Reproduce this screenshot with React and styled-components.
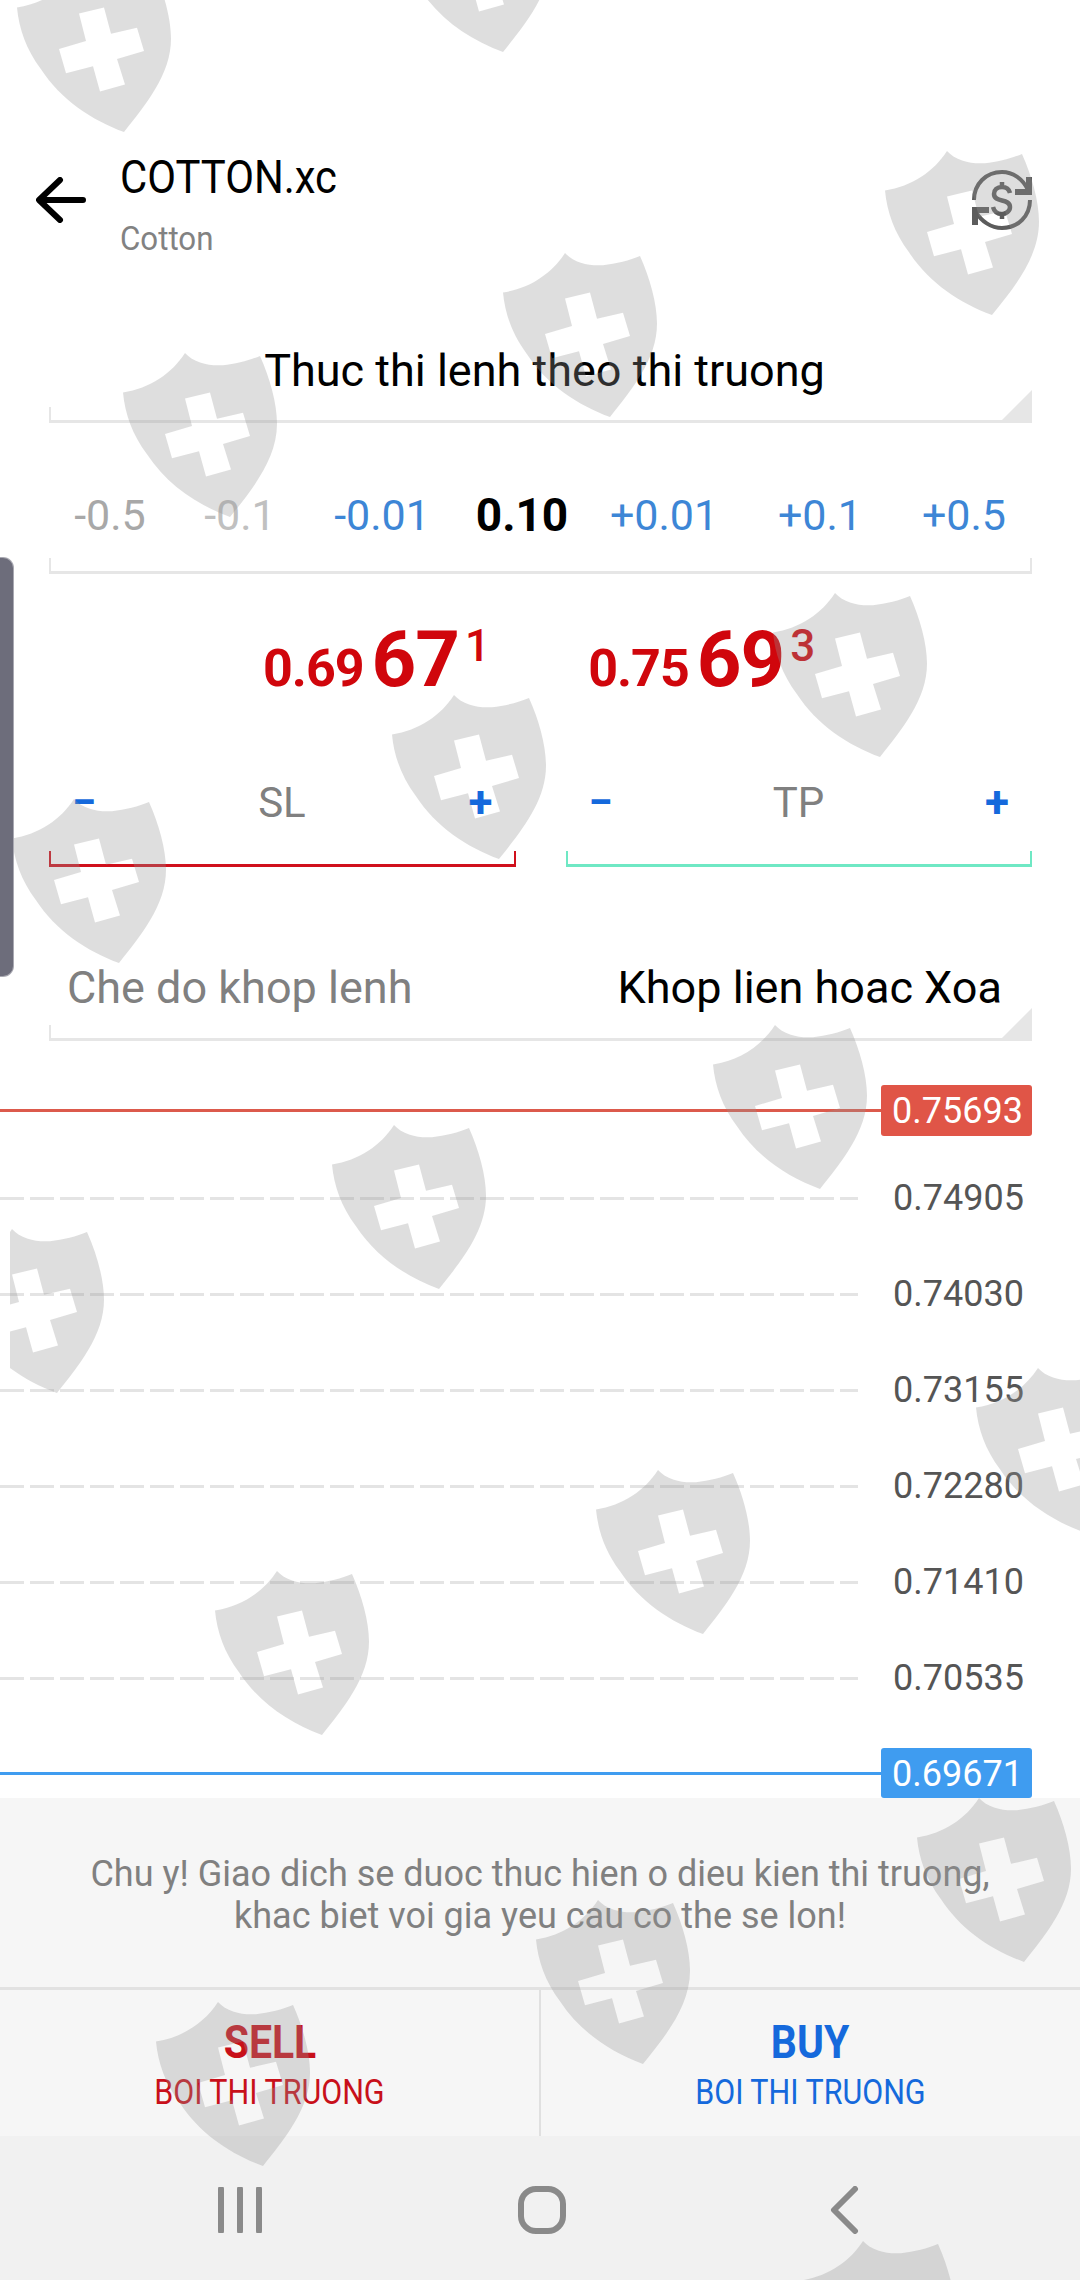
import React from 'react'
import styled, { createGlobalStyle } from 'styled-components'

const GlobalStyle = createGlobalStyle`
  html, body {
    margin: 0;
    padding: 0;
    background: #fff;
    font-family: Roboto, "Liberation Sans", sans-serif;
  }
`

const shields = [
  [16, -32], [395, -112], [884, 151], [502, 253], [122, 353], [772, 593],
  [391, 695], [11, 799], [712, 1025], [331, 1125], [-51, 1229], [975, 1368],
  [595, 1470], [214, 1571], [916, 1798], [535, 1900], [155, 2002], [800, 2241],
]

const ticks = [
  { label: '-0.5', tone: 'off' },
  { label: '-0.1', tone: 'faint' },
  { label: '-0.01', tone: 'on' },
  { label: '0.10', tone: 'value' },
  { label: '+0.01', tone: 'on' },
  { label: '+0.1', tone: 'on' },
  { label: '+0.5', tone: 'on' },
]

const levels = ['0.74905', '0.74030', '0.73155', '0.72280', '0.71410', '0.70535']

const toneColors = { off: '#a8a8a8', faint: '#c0c0c0', on: '#3d86d6', value: '#000' }

const App = () => (
  <Page>
    <GlobalStyle />
    <Header>
      <BackIcon viewBox="0 0 50 46">
        <path d="M47 23H4M24 3L3 23l21 20" />
      </BackIcon>
      <Titles>
        <Title>COTTON.xc</Title>
        <Subtitle>Cotton</Subtitle>
      </Titles>
      <SwapIcon viewBox="0 0 60 60">
        <path d="M2 30C2 14 14 2 30 2c11 0 21 7 26 18M58 30c0 16-12 28-28 28C19 58 9 51 4 42" fill="none" strokeWidth="4" />
        <path d="M60 7v18H43v-6h11V7zM0 55V37h17v6H6v12z" stroke="none" fill="#5c5c5c" />
        <path d="M38 23c-1-4-4-6-8-6-5 0-8 3-8 7 0 9 16 4 16 13 0 4-4 7-8 7-5 0-8-3-9-7M30 12v5M30 44v5" fill="none" strokeWidth="4.5" />
      </SwapIcon>
    </Header>

    <ExecBox $corner>
      <ExecText>Thuc thi lenh theo thi truong</ExecText>
    </ExecBox>

    <VolumeBox>
      {ticks.map((t) => (
        <VolumeTick key={t.label} $tone={t.tone}>{t.label}</VolumeTick>
      ))}
    </VolumeBox>

    <Prices>
      <Price>
        <PriceSmall>0.69</PriceSmall><PriceBig>67</PriceBig><PriceSup>1</PriceSup>
      </Price>
      <Price>
        <PriceSmall>0.75</PriceSmall><PriceBig>69</PriceBig><PriceSup>3</PriceSup>
      </Price>
    </Prices>

    <Stops>
      <StopBox $color="#d0101c">
        <Step>−</Step>
        <StopLabel>SL</StopLabel>
        <Step>+</Step>
      </StopBox>
      <StopBox $color="#6fe8c4">
        <Step>−</Step>
        <StopLabel>TP</StopLabel>
        <Step>+</Step>
      </StopBox>
    </Stops>

    <ModeBox $corner>
      <ModeLabel>Che do khop lenh</ModeLabel>
      <ModeValue>Khop lien hoac Xoa</ModeValue>
    </ModeBox>

    <Chart>
      <PriceLine>
        <Line $color="#dc5a4c" />
        <Badge $color="#e05547">0.75693</Badge>
      </PriceLine>
      <Levels>
        {levels.map((l) => (
          <Level key={l}>
            <Dash />
            <LevelText>{l}</LevelText>
          </Level>
        ))}
      </Levels>
      <BidLine>
        <Line $color="#3f9cf0" />
        <Badge $color="#3f9cf0">0.69671</Badge>
      </BidLine>
    </Chart>

    <Notice>
      Chu y! Giao dich se duoc thuc hien o dieu kien thi truong,
      <br />
      khac biet voi gia yeu cau co the se lon!
    </Notice>

    <Actions>
      <Action $color="#c8101a">
        <ActionName>SELL</ActionName>
        <ActionSub>BOI THI TRUONG</ActionSub>
      </Action>
      <Action $color="#1569dc" $divider>
        <ActionName>BUY</ActionName>
        <ActionSub>BOI THI TRUONG</ActionSub>
      </Action>
    </Actions>

    <NavBar>
      <NavIcon width="44" height="46" viewBox="0 0 44 46">
        <path d="M3 2v42M22 2v42M41 2v42" />
      </NavIcon>
      <NavIcon width="50" height="50" viewBox="0 0 50 50">
        <rect x="4" y="4" width="42" height="42" rx="15" />
      </NavIcon>
      <NavIcon width="30" height="48" viewBox="0 0 30 48">
        <path d="M26 3L5 24l21 21" />
      </NavIcon>
    </NavBar>

    <Watermarks>
      {shields.map(([x, y]) => (
        <Shield key={`${x}-${y}`} $x={x} $y={y} viewBox="0 0 156 163" preserveAspectRatio="none">
          <path
            fillRule="evenodd"
            d="M1 39C28 35 50 20 63 0C72 10 88 13 101 12C114 11 128 7 138 3C148 25 155 50 155 70C155 105 130 135 108 162C75 150 45 130 25 100C10 80 3 60 1 39ZM63 45L88 39L95 65L121 59L128 82L101 90L109 115L84 122L77 97L50 104L43 80L70 72Z"
          />
        </Shield>
      ))}
    </Watermarks>

    <SideHandle />
  </Page>
)

const Page = styled.div`
  position: relative;
  width: 1080px;
  height: 2280px;
  overflow: hidden;
  background: #fff;
  display: flex;
  flex-direction: column;
`

const Header = styled.header`
  display: flex;
  align-items: center;
  padding: 150px 48px 0 36px;
  height: 260px;
  box-sizing: border-box;
`

const BackIcon = styled.svg`
  width: 50px;
  height: 46px;
  fill: none;
  stroke: #000;
  stroke-width: 6;
  stroke-linecap: round;
  stroke-linejoin: round;
  margin-top: -10px;
`

const Titles = styled.div`
  margin-left: 34px;
  flex: 1;
`

const Title = styled.div`
  font-size: 47px;
  line-height: 52px;
  color: #000;
  transform: scaleX(0.89);
  transform-origin: left center;
`

const Subtitle = styled.div`
  margin-top: 13px;
  font-size: 34px;
  line-height: 44px;
  color: #828282;
  transform: scaleX(0.92);
  transform-origin: left center;
`

const SwapIcon = styled.svg`
  width: 60px;
  height: 60px;
  stroke: #5c5c5c;
  margin-top: -10px;
`

const Underlined = styled.div`
  position: relative;
  box-sizing: border-box;
  border-bottom: 3px solid ${(p) => p.$color || '#e6e6e6'};

  &::before,
  &::after {
    content: '';
    position: absolute;
    bottom: 0;
    width: 2px;
    height: 13px;
    background: ${(p) => p.$color || '#e6e6e6'};
  }
  &::before {
    left: 0;
  }
  &::after {
    right: 0;
    ${(p) => p.$corner && `
      width: 30px;
      height: 30px;
      clip-path: polygon(100% 0, 100% 100%, 0 100%);
    `}
  }
`

const ExecBox = styled(Underlined)`
  margin: 80px 48px 0 49px;
  padding-left: 8px;
  height: 83px;
  text-align: center;
`

const ExecText = styled.div`
  font-size: 45px;
  line-height: 62px;
  color: #000;
`

const VolumeBox = styled(Underlined)`
  margin: 0 48px 0 49px;
  height: 151px;
  padding-top: 67px;
  display: grid;
  grid-template-columns: 122px 138px 146px 134px 150px 162px 126px;
  align-content: start;
`

const VolumeTick = styled.span`
  text-align: center;
  font-size: ${(p) => (p.$tone === 'value' ? 46 : 43)}px;
  line-height: 50px;
  font-weight: ${(p) => (p.$tone === 'value' ? 700 : 400)};
  color: ${(p) => toneColors[p.$tone]};
`

const Prices = styled.div`
  height: 150px;
  box-sizing: border-box;
  padding: 22px 0 0 263px;
  display: flex;
  gap: 98px;
  align-items: flex-start;
`

const Price = styled.div`
  color: #d0060c;
  font-weight: 700;
  line-height: 100px;
  white-space: nowrap;
`

const PriceSmall = styled.span`
  font-size: 52px;
  letter-spacing: -1px;
`

const PriceBig = styled.span`
  font-size: 78px;
  letter-spacing: -1px;
  margin-left: 8px;
`

const PriceSup = styled.span`
  font-size: 44px;
  font-weight: 500;
  margin-left: 6px;
  vertical-align: 25px;
`

const Stops = styled.div`
  display: flex;
  gap: 50px;
  margin: 0 48px 0 49px;
`

const StopBox = styled(Underlined)`
  flex: 1;
  height: 143px;
  padding: 53px 23px 0 23px;
  display: flex;
  justify-content: space-between;
  align-items: flex-start;
`

const Step = styled.span`
  font-size: 44px;
  line-height: 50px;
  font-weight: 700;
  color: #1569dc;
`

const StopLabel = styled.span`
  font-size: 42px;
  line-height: 52px;
  margin-left: -1px;
  color: #808080;
`

const ModeBox = styled(Underlined)`
  margin: 0 48px 0 49px;
  height: 174px;
  padding: 96px 30px 0 18px;
  display: flex;
  justify-content: space-between;
  align-items: flex-start;
  font-size: 45px;
  line-height: 50px;
`

const ModeLabel = styled.span`
  color: #808080;
`

const ModeValue = styled.span`
  color: #000;
`

const Chart = styled.section`
  display: flex;
  flex-direction: column;
  padding-right: 48px;
`

const PriceLine = styled.div`
  display: flex;
  align-items: center;
  height: 51px;
  margin-top: 44px;
`

const BidLine = styled(PriceLine)`
  height: 50px;
  margin-top: 50px;
`

const Line = styled.div`
  flex: 1;
  height: 3px;
  background: ${(p) => p.$color};
`

const Badge = styled.div`
  width: 151px;
  padding-left: 2px;
  box-sizing: border-box;
  height: 100%;
  border-radius: 3px;
  background: ${(p) => p.$color};
  color: #fff;
  font-size: 36px;
  text-align: center;
  line-height: 52px;
`

const Levels = styled.div`
  display: flex;
  flex-direction: column;
  gap: 56px;
  margin-top: 42px;
`

const Level = styled.div`
  display: flex;
  align-items: center;
  height: 40px;
`

const Dash = styled.div`
  width: 858px;
  height: 3px;
  background: repeating-linear-gradient(90deg, #e4e4e4 0 24px, transparent 24px 30px);
`

const LevelText = styled.span`
  margin-left: 35px;
  font-size: 36px;
  line-height: 42px;
  color: #555;
`

const Notice = styled.div`
  box-sizing: border-box;
  height: 192px;
  padding-top: 55px;
  background: #f6f6f6;
  border-bottom: 3px solid #e2e2e2;
  text-align: center;
  font-size: 36px;
  line-height: 42px;
  color: #808080;
`

const Actions = styled.div`
  display: flex;
  height: 146px;
  background: #f6f6f6;
`

const Action = styled.button`
  flex: 1;
  border: none;
  padding: 27px 0 0;
  background: none;
  font-family: inherit;
  display: flex;
  flex-direction: column;
  align-items: center;
  color: ${(p) => p.$color};
  ${(p) => p.$divider && 'border-left: 2px solid #e0e0e0;'}
`

const ActionName = styled.span`
  font-size: 46px;
  line-height: 50px;
  font-weight: 700;
  transform: scaleX(0.89);
`

const ActionSub = styled.span`
  margin-top: 6px;
  font-size: 35px;
  line-height: 40px;
  transform: scaleX(0.87);
`

const NavBar = styled.nav`
  flex: 1;
  background: #f1f1f1;
  box-sizing: border-box;
  padding: 4px 0 0 89px;
  display: grid;
  grid-template-columns: repeat(3, 302px);
  justify-items: center;
  align-items: center;
`

const NavIcon = styled.svg`
  fill: none;
  stroke: #8a8a8a;
  stroke-width: 6;
  stroke-linecap: round;
  stroke-linejoin: round;
`

const Watermarks = styled.div`
  position: absolute;
  inset: 0 0 0 10px;
  overflow: hidden;
  pointer-events: none;
`

const Shield = styled.svg`
  position: absolute;
  left: ${(p) => p.$x - 10}px;
  top: ${(p) => p.$y}px;
  width: 156px;
  height: 165px;
  fill: rgba(150, 150, 150, 0.31);
`

const SideHandle = styled.div`
  position: absolute;
  left: 0;
  top: 558px;
  width: 13px;
  height: 418px;
  background: #6d6d7b;
  box-shadow: 0 0 0 1px #a9a9b2;
  border-radius: 0 10px 10px 0;
`

export default App
